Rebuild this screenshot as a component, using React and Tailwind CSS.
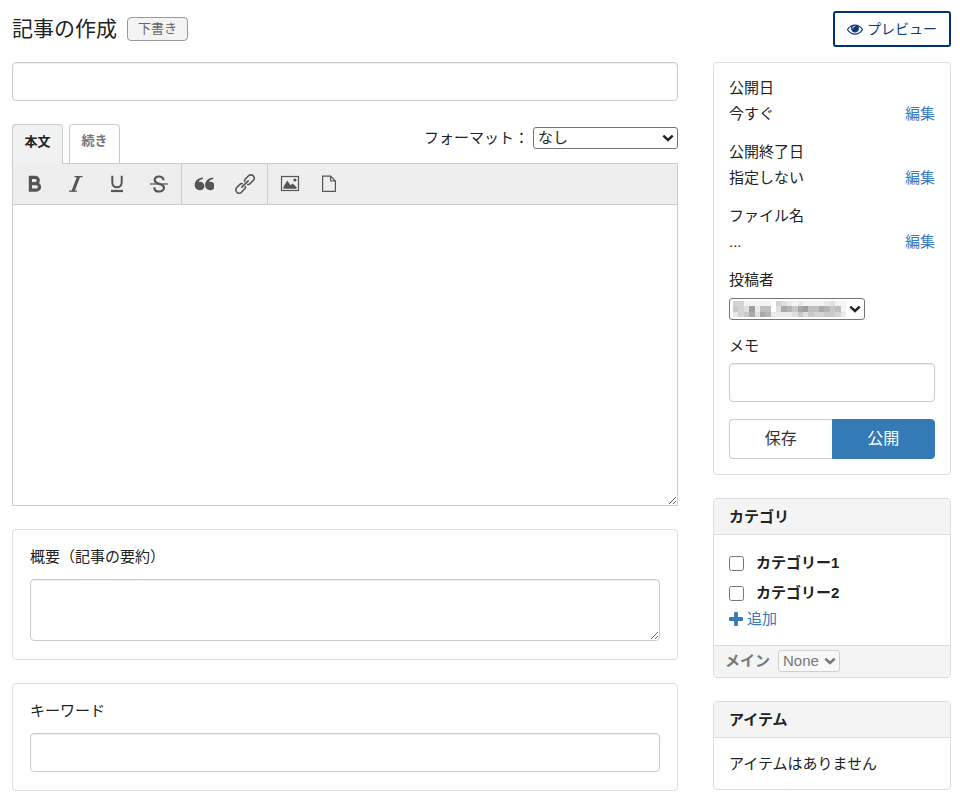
import React, { useState } from "react";

const fieldClass =
  "block w-full rounded border border-[#ccc] bg-white px-3 text-[15px] shadow-[inset_0_1px_1px_rgba(0,0,0,0.075)] outline-none focus:border-[#66afe9]";

// darkness of each cell, 0 to 9
const mosaicRows = [
  "441111104321211112311",
  "543926603875896687561",
  "245838722223535445542",
];

const EyeIcon = () => (
  <svg width="16" height="16" viewBox="0 0 1792 1792" fill="currentColor">
    <path d="M1664 960q-152-236-381-353 61 104 61 225 0 185-131.500 316.500t-316.500 131.500-316.500-131.500-131.500-316.500q0-121 61-225-229 117-381 353 133 205 333.500 326.500t434.500 121.500 434.500-121.500 333.500-326.500zm-720-384q0-20-14-34t-34-14q-125 0-214.500 89.500t-89.500 214.500q0 20 14 34t34 14 34-14 14-34q0-86 61-147t147-61q20 0 34-14t14-34zm848 384q0 34-20 69-140 230-376.500 368.500t-499.500 138.500-499.500-139-376.500-368q-20-35-20-69t20-69q140-229 376.500-368t499.500-139 499.500 139 376.500 368q20 35 20 69z" />
  </svg>
);

const PlusIcon = () => (
  <svg width="14" height="14" viewBox="192 128 1408 1408" fill="currentColor">
    <path d="M1600 736v192q0 40-28 68t-68 28h-416v416q0 40-28 68t-68 28h-192q-40 0-68-28t-28-68v-416h-416q-40 0-68-28t-28-68v-192q0-40 28-68t68-28h416v-416q0-40 28-68t68-28h192q40 0 68 28t28 68v416h416q40 0 68 28t28 68z" />
  </svg>
);

const BoldIcon = () => (
  <svg width="20" height="20" viewBox="0 0 20 20" fill="none" stroke="#555" strokeWidth="3.2">
    <path d="M5.400 3.400h4.800a3.100 3.100 0 0 1 0 6.200H5.400zM5.400 9.600h5.800a3.300 3.300 0 0 1 0 6.600H5.400z" />
  </svg>
);

const ItalicIcon = () => (
  <svg width="20" height="20" viewBox="0 0 20 20" fill="none" stroke="#555">
    <path d="M8.500 2.600h8M3 17.200h8" strokeWidth="1.200" />
    <path d="M12.600 2.600 7 17.200" strokeWidth="3" />
  </svg>
);

const UnderlineIcon = () => (
  <svg width="20" height="20" viewBox="0 0 20 20" fill="none" stroke="#555">
    <path d="M5.300 1.800v6.800a4.700 4.700 0 0 0 9.400 0V1.800" strokeWidth="2" />
    <path d="M4 17h12" strokeWidth="2.200" />
  </svg>
);

const StrikeIcon = () => (
  <svg width="20" height="20" viewBox="0 0 20 20" fill="none" stroke="#555">
    <path
      d="M14.600 6.200C14.200 3.800 12.500 2.500 10 2.500 7.500 2.500 5.700 3.800 5.700 6c0 2.300 2 3.200 4.500 3.900 2.900.8 4.700 1.600 4.700 3.900 0 2.200-2 3.700-4.700 3.700-2.800 0-4.800-1.500-5-4.200"
      strokeWidth="2.200"
    />
    <path d="M1 10h18" strokeWidth="1.200" />
  </svg>
);

const QuoteIcon = () => (
  <svg width="20" height="20" viewBox="0 0 20 20" fill="#555">
    <path d="M8.800 3.500v1.600C6.600 5.500 4.900 6.600 4.500 8.200c.4-.3 1-.4 1.600-.4a4.200 4.200 0 0 1 0 8.500C3 16.300.700 14.200.700 11.100.700 6.900 4 3.800 8.800 3.500z" />
    <path d="M19.200 3.500v1.600c-2.200.4-3.900 1.500-4.300 3.100.4-.3 1-.4 1.600-.4a4.200 4.200 0 0 1 0 8.500c-3.100 0-5.400-2.100-5.400-5.200 0-4.200 3.300-7.300 8.100-7.600z" />
  </svg>
);

const LinkIcon = () => (
  <svg width="20" height="20" viewBox="0 0 20 20" fill="none" stroke="#555" strokeWidth="1.600">
    <g transform="translate(10 10) rotate(-45)">
      <path d="M1.500-1.600a2.200 2.200 0 0 1 2-1.700H8.300a3.300 3.300 0 0 1 0 6.600H3.500a2.200 2.200 0 0 1-2-1.700" />
      <path d="M-1.500-1.600a2.200 2.200 0 0 0-2-1.700H-8.300a3.300 3.300 0 0 0 0 6.600H-3.500a2.200 2.200 0 0 0 2-1.700" />
      <path d="M-4.500 0h9" strokeLinecap="round" />
    </g>
  </svg>
);

const ImageIcon = () => (
  <svg width="20" height="20" viewBox="0 0 20 20" fill="#555">
    <rect x="1.500" y="2.500" width="17" height="14" fill="none" stroke="#555" strokeWidth="1.200" />
    <path d="M3.500 14.800v-2l3.800-6.300 3.200 4.800 2-1.800 4 3.600v1.700z" />
    <circle cx="14.900" cy="6" r="1.600" />
  </svg>
);

const FileIcon = () => (
  <svg width="20" height="20" viewBox="0 0 20 20" fill="none" stroke="#555" strokeWidth="1.200">
    <path d="M3.600 2.200h8l4.800 4.800v10.300H3.600zM11.600 2.200V7h4.800" />
  </svg>
);

const Chevron = () => (
  <svg
    className="pointer-events-none absolute right-1 top-1/2 h-3 w-3 -translate-y-1/2"
    viewBox="0 0 12 12"
    fill="none"
    stroke="currentColor"
    strokeWidth="2.400"
  >
    <path d="M1.300 3.600 6 8 10.700 3.600" />
  </svg>
);

const Mosaic = () => (
  <svg
    className="pointer-events-none absolute left-1 top-[3px] h-4 w-[113px]"
    viewBox="0 0 21 3"
    preserveAspectRatio="none"
    shapeRendering="crispEdges"
  >
    {mosaicRows.map((row, y) =>
      row.split("").map((level, x) => (
        <rect
          key={`${x}-${y}`}
          x={x}
          y={y}
          width="1"
          height="1"
          fill="#000"
          fillOpacity={level * 0.042}
        />
      ))
    )}
  </svg>
);

const ToolButton = ({ label, icon: Icon, className = "w-[41px]" }) => (
  <button
    type="button"
    aria-label={label}
    className={`flex h-full items-center justify-center hover:bg-[#ddd] ${className}`}
  >
    <Icon />
  </button>
);

const PublishRow = ({ title, value }) => (
  <div className="mb-3 leading-[26px]">
    <div>{title}</div>
    <div className="flex justify-between">
      <span>{value}</span>
      <a href="#edit" className="text-[#337ab7] hover:underline">
        編集
      </a>
    </div>
  </div>
);

const App = () => {
  const [tab, setTab] = useState("body");
  const [checked, setChecked] = useState([]);

  const toggleCategory = (name) => {
    setChecked(
      checked.includes(name)
        ? checked.filter((item) => item !== name)
        : [...checked, name]
    );
  };

  const tabClass = (name) =>
    name === tab
      ? "relative z-10 -mb-px h-10 w-[51px] rounded-t-sm border border-b-0 border-[#c5cdd1] bg-[#f1f1f1] pb-[6px] text-[13px] font-bold text-[#222]"
      : "h-[39px] w-[51px] rounded-t-sm border border-b-0 border-[#c5cdd1] bg-white pb-[6px] text-[13px] font-bold text-[#777]";

  return (
    <div className="min-h-screen bg-white pb-4 pl-3 pr-[9px] pt-[11px] font-['Liberation_Sans','Noto_Sans_CJK_JP',sans-serif] text-[15px] text-[#222]">
      <header className="mb-[15px] flex items-center justify-between">
        <div className="flex items-center gap-[10px]">
          <h1 className="text-[21px] leading-9">記事の作成</h1>
          <span className="flex h-6 items-center rounded-sm border border-[#999] bg-[#f3f3f3] px-[10px] text-[13px] text-[#666]">
            下書き
          </span>
        </div>
        <button
          type="button"
          className="flex h-9 items-center gap-1 rounded-[3px] border-2 border-[#003471] px-3 text-[14px] text-[#0f3c78]"
        >
          <EyeIcon />
          プレビュー
        </button>
      </header>

      <div className="grid grid-cols-[minmax(0,1fr)_238px] items-start gap-[35px]">
        <main>
          <input type="text" aria-label="タイトル" className={`${fieldClass} h-[39px]`} />

          <div className="mt-[23px] flex items-start justify-between">
            <div className="flex items-start gap-[6px]">
              <button type="button" onClick={() => setTab("body")} className={tabClass("body")}>
                本文
              </button>
              <button type="button" onClick={() => setTab("more")} className={tabClass("more")}>
                続き
              </button>
            </div>
            <div className="flex items-center pt-[3px]">
              <label htmlFor="format" className="leading-[22px]">
                フォーマット：
              </label>
              <div className="relative ml-1">
                <select
                  id="format"
                  className="block h-[22px] w-[145px] appearance-none rounded-[3px] border border-[#767676] bg-white pl-1 pr-5 leading-5"
                >
                  <option>なし</option>
                </select>
                <Chevron />
              </div>
            </div>
          </div>

          <div className="border border-[#ccc]">
            <div className="flex h-[41px] border-b border-[#ccc] bg-[#eee]">
              <div className="flex border-r border-[#ccc] pl-px">
                <ToolButton label="太字" icon={BoldIcon} />
                <ToolButton label="斜体" icon={ItalicIcon} />
                <ToolButton label="下線" icon={UnderlineIcon} />
                <ToolButton label="取り消し線" icon={StrikeIcon} className="w-11" />
              </div>
              <div className="flex border-r border-[#ccc] pl-px pr-[2px]">
                <ToolButton label="引用" icon={QuoteIcon} />
                <ToolButton label="リンク" icon={LinkIcon} />
              </div>
              <div className="flex px-[2px]">
                <ToolButton label="画像" icon={ImageIcon} className="w-10" />
                <ToolButton label="ファイル" icon={FileIcon} className="w-[38px]" />
              </div>
            </div>
            <textarea aria-label="本文" className="block h-[300px] w-full resize-y p-3 outline-none" />
          </div>

          <section className="mt-[23px] rounded border border-[#ddd] px-[17px] pb-[18px] pt-[15px]">
            <label htmlFor="excerpt" className="mb-[10px] block leading-6">
              概要（記事の要約）
            </label>
            <textarea id="excerpt" className={`${fieldClass} h-[62px] resize-y`} />
          </section>

          <section className="mt-[23px] rounded border border-[#ddd] px-[17px] pb-[18px] pt-[15px]">
            <label htmlFor="keywords" className="mb-[10px] block leading-6">
              キーワード
            </label>
            <input id="keywords" type="text" className={`${fieldClass} h-[39px]`} />
          </section>
        </main>

        <aside>
          <section className="rounded border border-[#ddd] px-[15px] pb-[15px] pt-3">
            <PublishRow title="公開日" value="今すぐ" />
            <PublishRow title="公開終了日" value="指定しない" />
            <PublishRow title="ファイル名" value="..." />

            <label htmlFor="author" className="block leading-[26px]">
              投稿者
            </label>
            <div className="relative mb-[13px] mt-[5px] w-[136px]">
              <select
                id="author"
                className="block h-[22px] w-full appearance-none rounded-[3px] border border-[#767676] bg-white"
              />
              <Mosaic />
              <Chevron />
            </div>

            <label htmlFor="memo" className="mb-1 block leading-[26px]">
              メモ
            </label>
            <input id="memo" type="text" className={`${fieldClass} h-[39px]`} />

            <div className="mt-[17px] flex h-10 text-[16px]">
              <button type="button" className="flex-1 rounded-l border border-r-0 border-[#ccc] text-[#333]">
                保存
              </button>
              <button type="button" className="flex-1 rounded-r border border-[#337ab7] bg-[#337ab7] text-white">
                公開
              </button>
            </div>
          </section>

          <section className="mt-[23px] overflow-hidden rounded border border-[#ddd]">
            <h2 className="border-b border-[#ddd] bg-[#f4f4f4] px-[15px] py-[5px] font-bold leading-[25px]">カテゴリ</h2>
            <div className="px-[15px] pb-[15px] pt-[13px]">
              {["カテゴリー1", "カテゴリー2"].map((name) => (
                <label key={name} className="flex h-[30px] items-center gap-3 font-bold">
                  <input
                    type="checkbox"
                    checked={checked.includes(name)}
                    onChange={() => toggleCategory(name)}
                    className="h-[15px] w-[15px]"
                  />
                  {name}
                </label>
              ))}
              <a href="#add" className="flex items-center gap-1 leading-[22px] text-[#337ab7]">
                <PlusIcon />
                追加
              </a>
            </div>
            <div className="flex items-center gap-2 border-t border-[#ddd] bg-[#f4f4f4] px-[11px] py-1 text-[#777]">
              <label htmlFor="main-category" className="font-bold">
                メイン
              </label>
              <div className="relative">
                <select
                  id="main-category"
                  className="block h-[22px] w-[62px] appearance-none rounded-[3px] border border-[#d0d0d0] bg-[#f8f8f8] pl-1 leading-5"
                >
                  <option>None</option>
                </select>
                <Chevron />
              </div>
            </div>
          </section>

          <section className="mt-[23px] overflow-hidden rounded border border-[#ddd]">
            <h2 className="border-b border-[#ddd] bg-[#f4f4f4] px-[15px] py-[5px] font-bold leading-[25px]">アイテム</h2>
            <p className="px-[15px] py-3 leading-[27px]">アイテムはありません</p>
          </section>
        </aside>
      </div>
    </div>
  );
};

export default App;
